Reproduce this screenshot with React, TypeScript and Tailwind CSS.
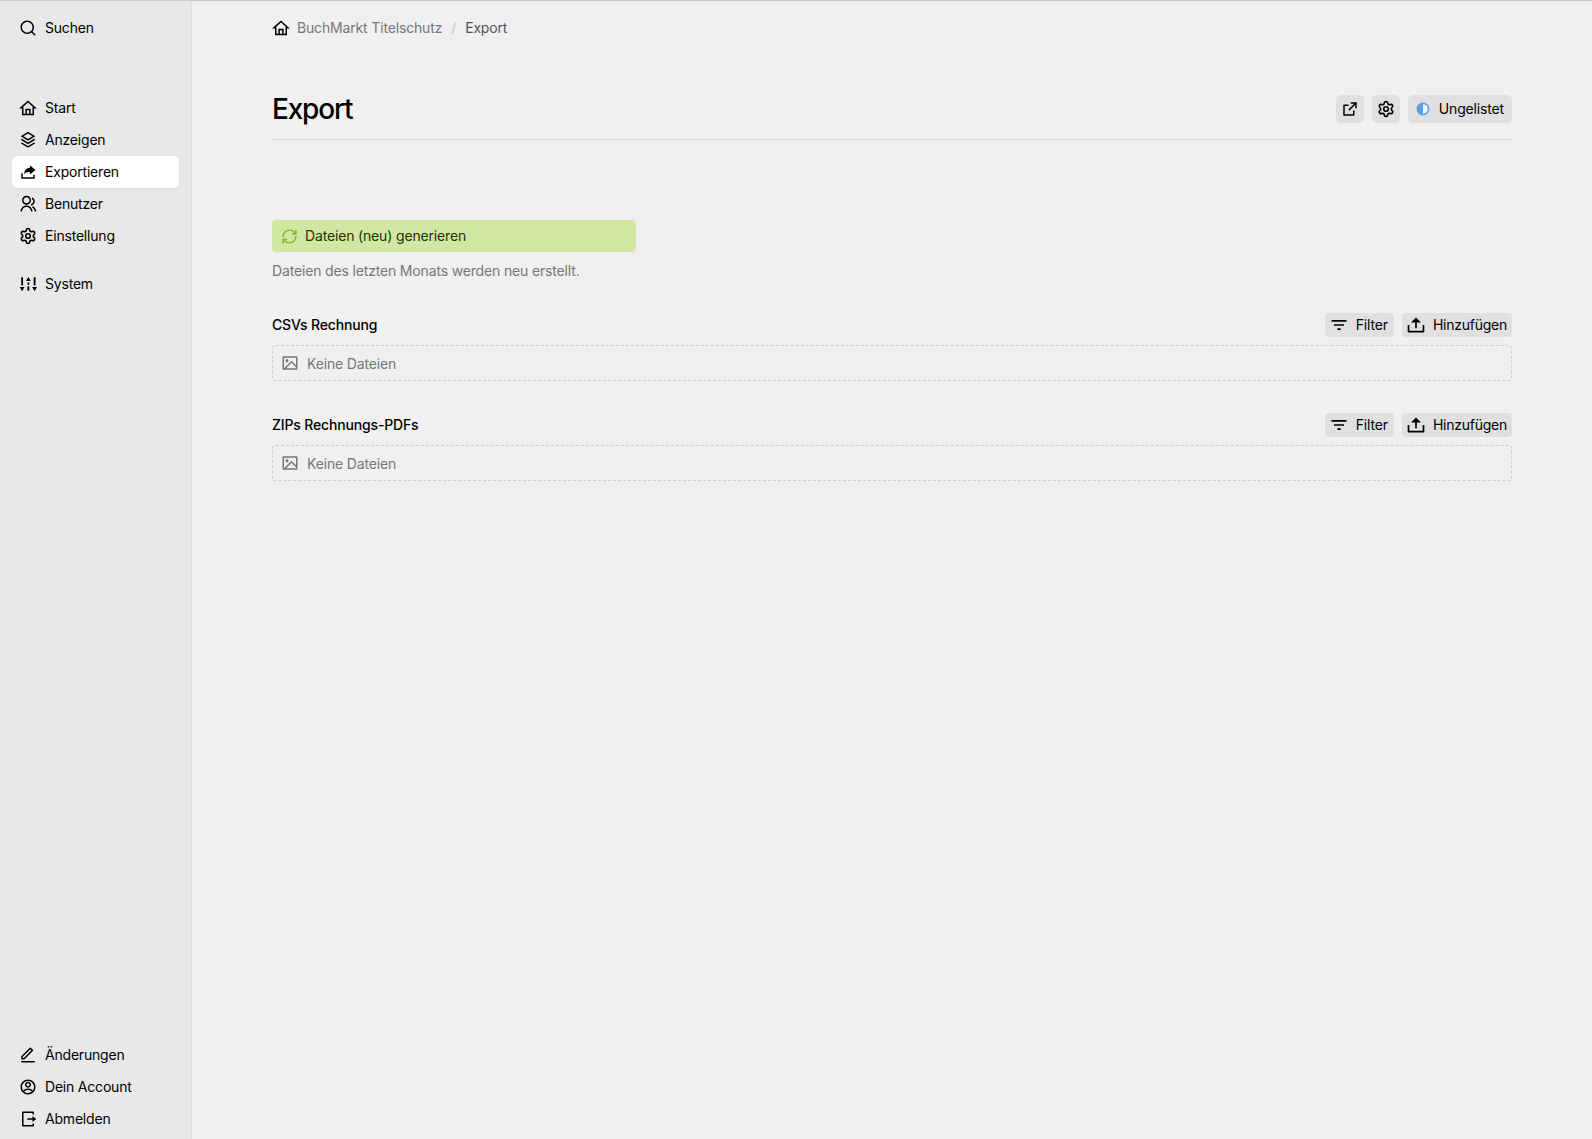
import React from "react";
import {
  RiSearchLine, RiStackLine, RiGroupLine,
  RiEditLine, RiAccountCircleLine, RiLogoutBoxRLine, RiExternalLinkLine, RiFilter3Line, RiUpload2Line, RiImageLine,
} from "react-icons/ri";
import { RefreshCw, Settings } from "lucide-react";

type IconP = { className?: string };
type IconT = React.ComponentType<IconP>;

function HomeIcon({ className }: IconP) {
  return (
    <svg viewBox="0 0 24 24" className={className} fill="none" stroke="currentColor" strokeWidth="2" strokeLinejoin="miter" aria-hidden="true">
      <path d="M2.8 11.5 12 3.3l9.2 8.2H19V20.5H5V11.5Z" />
      <path d="M9.5 20.5V14h5v6.5" />
    </svg>
  );
}

function ExportIcon({ className }: IconP) {
  return (
    <svg viewBox="0 0 24 24" className={className} aria-hidden="true">
      <path d="M4 13.5V20h16v-4.5" fill="none" stroke="currentColor" strokeWidth="2" />
      <path d="M14.5 3 22 9.2l-7.5 6.2V12h-1.4c-2.7 0-4.6 1-6.1 3 0-5 3-8.8 8-8.8h-.5V3Z" fill="currentColor" />
    </svg>
  );
}

function SystemIcon({ className }: IconP) {
  return (
    <svg viewBox="0 0 24 24" className={className} aria-hidden="true" fill="currentColor">
      <path d="M3 3h2.4v11H3zM11.3 10h2.4v3h-2.4zM11.3 15h2.4v6h-2.4zM19.6 3H22v11h-2.4z" />
      <path d="M1 16h6.4L4.2 21.5zM9.3 8h6.4l-3.2-5.5zM17.6 16H24l-3.2 5.5z" />
    </svg>
  );
}

function CogIcon({ className }: IconP) {
  return <Settings className={className} strokeWidth={2.2} />;
}

function NavItem({ icon: Icon, label, active }: { icon: IconT; label: string; active?: boolean }) {
  return (
    <div className={`flex h-8 items-center gap-2 rounded-[5px] pl-[7px] text-[14px] tracking-[-0.2px] text-black ${active ? "bg-white shadow-[0_1px_2px_rgba(0,0,0,0.05)]" : ""}`}>
      <Icon className="size-[18px] shrink-0" />
      <span className="pb-[2px]">{label}</span>
    </div>
  );
}

function Section({ title }: { title: string }) {
  return (
    <section className="mb-[32px]">
      <div className="mb-2 flex h-6 items-center justify-between">
        <h2 className="pb-[1px] text-[14px] font-medium tracking-[-0.16px] text-black">{title}</h2>
        <div className="flex gap-2">
          <button className="flex h-6 items-center gap-[7px] rounded-[4px] bg-[#e0e0e0] pl-1 pr-[6px] text-[14px] tracking-[-0.16px] text-black">
            <RiFilter3Line className="size-5" />
            <span className="pb-[1px]">Filter</span>
          </button>
          <button className="flex h-6 items-center gap-[7px] rounded-[4px] bg-[#e0e0e0] pl-1 pr-[5px] text-[14px] tracking-[-0.25px] text-black">
            <RiUpload2Line className="size-5" />
            <span className="pb-[1px]">Hinzufügen</span>
          </button>
        </div>
      </div>
      <div className="flex h-9 items-center gap-2 rounded-[4px] border border-dashed border-[#cfcfcf] pl-2 text-[14px] tracking-[-0.16px] text-[#777]">
        <RiImageLine className="size-[18px] text-[#777]" />
        <span>Keine Dateien</span>
      </div>
    </section>
  );
}

export default function App() {
  return (
    <div className="flex h-[1139px] border-t border-[#c8c8c8] bg-[#f0f0f0] font-['Inter',sans-serif]">
      <aside className="flex w-[192px] shrink-0 flex-col border-r border-[#e0e0e0] bg-[#e8e8e8] px-3 pb-1">
        <div className="mt-[11px]">
          <NavItem icon={RiSearchLine} label="Suchen" />
        </div>
        <nav className="mt-12">
          <NavItem icon={HomeIcon} label="Start" />
          <NavItem icon={RiStackLine} label="Anzeigen" />
          <NavItem icon={ExportIcon} label="Exportieren" active />
          <NavItem icon={RiGroupLine} label="Benutzer" />
          <NavItem icon={CogIcon} label="Einstellung" />
          <div className="mt-4">
            <NavItem icon={SystemIcon} label="System" />
          </div>
        </nav>
        <div className="mt-auto">
          <NavItem icon={RiEditLine} label="Änderungen" />
          <NavItem icon={RiAccountCircleLine} label="Dein Account" />
          <NavItem icon={RiLogoutBoxRLine} label="Abmelden" />
        </div>
      </aside>
      <main className="min-w-0 flex-1 px-[80px]">
        <div className="mt-[11px] flex h-8 items-center text-[14px] tracking-[-0.16px]">
          <HomeIcon className="mr-[7px] size-[18px] text-black" />
          <span className="pb-[2px] text-[#777]">BuchMarkt Titelschutz</span>
          <span className="mx-[9px] pb-[2px] text-[#c5c5c5]">/</span>
          <span className="pb-[2px] text-[#555]">Export</span>
        </div>
        <header className="mt-[34px] flex h-[62px] items-start justify-between border-b border-[#dcdcdc]">
          <h1 className="pt-[9px] text-[28px] font-medium leading-[44px] tracking-[-1.2px] text-black">Export</h1>
          <div className="mt-[17px] flex gap-2">
            <button className="flex h-7 w-7 items-center justify-center rounded-[5px] bg-[#e0e0e0]">
              <RiExternalLinkLine className="size-[18px] text-black" />
            </button>
            <button className="flex h-7 w-7 items-center justify-center rounded-[5px] bg-[#e0e0e0]">
              <CogIcon className="size-[18px] text-black" />
            </button>
            <button className="flex h-7 items-center gap-[6px] rounded-[5px] bg-[#e0e0e0] pl-[5px] pr-2 text-[14px] tracking-[-0.16px] text-black">
              <svg viewBox="0 0 20 20" className="size-5" aria-hidden="true">
                <circle cx="10" cy="10" r="5.6" fill="#f2f6fb" stroke="#5a9ee6" strokeWidth="1.6" />
                <path d="M10 4a6 6 0 0 0 0 12z" fill="#5a9ee6" />
              </svg>
              <span className="pb-[1px]">Ungelistet</span>
            </button>
          </div>
        </header>
        <button className="mt-[80px] flex h-8 w-[364px] items-center gap-[7px] rounded-[4px] bg-[#d2e8a2] pl-[9px] text-[14px] tracking-[-0.16px] text-[#233400]">
          <RefreshCw className="size-[17px] text-[#7fb32c]" strokeWidth={2} />
          <span className="pb-[1px]">Dateien (neu) generieren</span>
        </button>
        <p className="mt-[7px] pb-[1px] text-[14px] leading-6 tracking-[-0.16px] text-[#777]">Dateien des letzten Monats werden neu erstellt.</p>
        <div className="mt-[29px]">
          <Section title="CSVs Rechnung" />
          <Section title="ZIPs Rechnungs-PDFs" />
        </div>
      </main>
    </div>
  );
}
